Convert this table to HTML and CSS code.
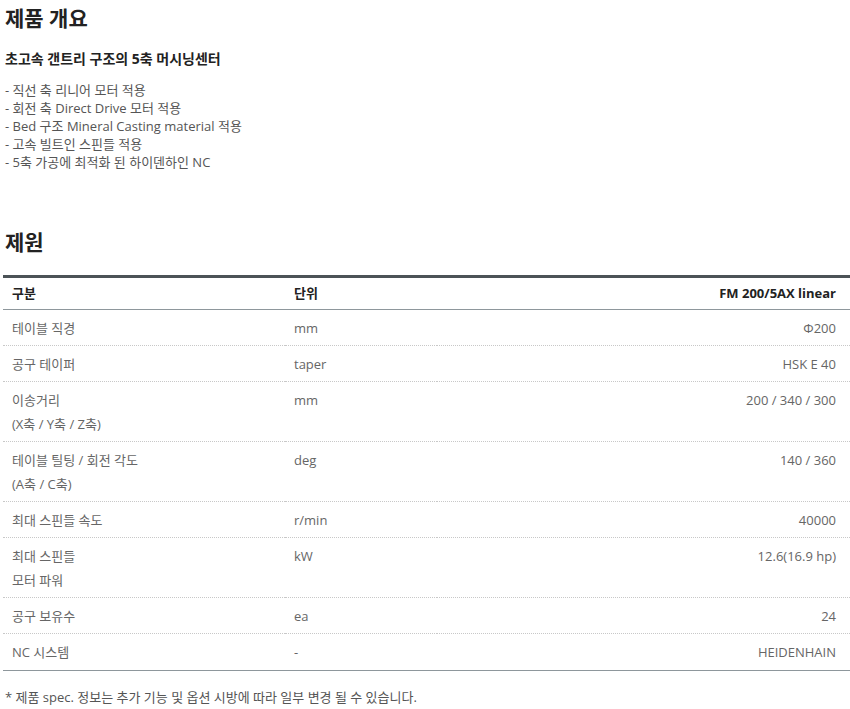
FILE: index.html
```html
<!DOCTYPE html>
<html lang="ko">

<head>
  <meta charset="UTF-8" />
  <meta name="viewport" content="width=device-width, initial-scale=1" />
  <title>FM 200/5AX linear</title>
  <link rel="stylesheet" href="styles.css">
</head>

<body>
  <h2 class="section-title">제품 개요</h2>
  <p class="subtitle">초고속 갠트리 구조의 5축 머시닝센터</p>
  <ul class="features">
    <li>- 직선 축 리니어 모터 적용</li>
    <li>- 회전 축 Direct Drive 모터 적용</li>
    <li>- Bed 구조 Mineral Casting material 적용</li>
    <li>- 고속 빌트인 스핀들 적용</li>
    <li>- 5축 가공에 최적화 된 하이덴하인 NC</li>
  </ul>

  <h2 class="section-title spec-title">제원</h2>
  <table class="spec-table">
    <thead>
      <tr>
        <th class="col-name">구분</th>
        <th class="col-unit">단위</th>
        <th class="col-value">FM 200/5AX linear</th>
      </tr>
    </thead>
    <tbody>
      <tr>
        <td>테이블 직경</td>
        <td>mm</td>
        <td class="col-value">Φ200</td>
      </tr>
      <tr>
        <td>공구 테이퍼</td>
        <td>taper</td>
        <td class="col-value">HSK E 40</td>
      </tr>
      <tr>
        <td>이송거리<br>(X축 / Y축 / Z축)</td>
        <td>mm</td>
        <td class="col-value">200 / 340 / 300</td>
      </tr>
      <tr>
        <td>테이블 틸팅 / 회전 각도<br>(A축 / C축)</td>
        <td>deg</td>
        <td class="col-value">140 / 360</td>
      </tr>
      <tr>
        <td>최대 스핀들 속도</td>
        <td>r/min</td>
        <td class="col-value">40000</td>
      </tr>
      <tr>
        <td>최대 스핀들<br>모터 파워</td>
        <td>kW</td>
        <td class="col-value">12.6(16.9 hp)</td>
      </tr>
      <tr>
        <td>공구 보유수</td>
        <td>ea</td>
        <td class="col-value">24</td>
      </tr>
      <tr>
        <td>NC 시스템</td>
        <td>-</td>
        <td class="col-value">HEIDENHAIN</td>
      </tr>
    </tbody>
  </table>

  <p class="note">* 제품 spec. 정보는 추가 기능 및 옵션 시방에 따라 일부 변경 될 수 있습니다.</p>
</body>

</html>
```

FILE: styles.css
```css
body {
  margin: 0;
  padding: 0 0 0 3px;
  background: #fff;
  font-family: 'Open Sans', 'Noto Sans CJK KR', sans-serif;
  font-size: 13px;
  color: #555;
}

.section-title {
  margin: 0;
  padding-left: 2px;
  font-size: 21px;
  line-height: 36px;
  font-weight: bold;
  color: #222;
}

.subtitle {
  margin: 13px 0 0;
  padding-left: 2px;
  font-size: 14px;
  line-height: 20px;
  font-weight: bold;
  color: #222;
}

.features {
  list-style: none;
  margin: 12px 0 0;
  padding: 0 0 0 2px;
  line-height: 18px;
}

.spec-title {
  margin-top: 53px;
}

.spec-table {
  width: 100%;
  margin-top: 15px;
  border-collapse: collapse;
  border-top: 3px solid #4c5357;
  border-bottom: 1px solid #8e979c;
}

.spec-table th {
  padding: 4px 9px;
  line-height: 23px;
  text-align: left;
  font-weight: bold;
  color: #222;
  border-bottom: 1px solid #8e979c;
}

.spec-table td {
  padding: 6px 9px 5px;
  line-height: 24px;
  color: #666;
  vertical-align: top;
  border-bottom: 1px dotted #c8c8c8;
}

.spec-table tbody tr:last-child td {
  padding-bottom: 6px;
  border-bottom: none;
}

.col-name {
  width: 264px;
}

.spec-table .col-value {
  text-align: right;
  padding-right: 14px;
}

.note {
  margin: 16px 0 0;
  padding-left: 2px;
  line-height: 20px;
  color: #555;
}
```
